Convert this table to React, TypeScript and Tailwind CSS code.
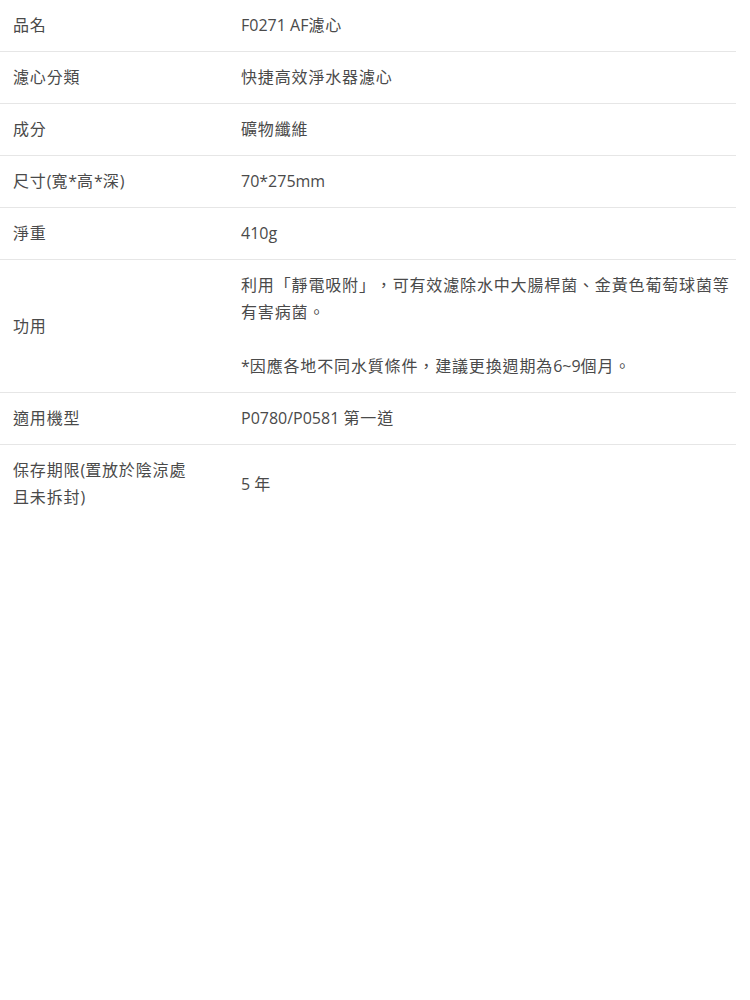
import React from 'react'

// CJK runs get extra tracking; latin keeps its natural width
function T({ s }: { s: string }) {
  const parts = s.split(/([\u3000-\u9fff\uff00-\uffef]+)/)
  return (
    <>
      {parts.map((p, i) =>
        i % 2 === 1 ? (
          <span key={i} className="tracking-[0.85px]">{p}</span>
        ) : (
          <span key={i}>{p}</span>
        )
      )}
    </>
  )
}

const rows: { label: React.ReactNode; value: React.ReactNode }[] = [
  { label: <T s="品名" />, value: <T s="F0271 AF濾心" /> },
  { label: <T s="濾心分類" />, value: <T s="快捷高效淨水器濾心" /> },
  { label: <T s="成分" />, value: <T s="礦物纖維" /> },
  { label: <T s="尺寸(寬*高*深)" />, value: <T s="70*275mm" /> },
  { label: <T s="淨重" />, value: <T s="410g" /> },
  {
    label: <T s="功用" />,
    value: (
      <>
        <p><T s="利用「靜電吸附」，可有效濾除水中大腸桿菌、金黃色葡萄球菌等有害病菌。" /></p>
        <p className="mt-[27px]"><T s="*因應各地不同水質條件，建議更換週期為6~9個月。" /></p>
      </>
    ),
  },
  { label: <T s="適用機型" />, value: <T s="P0780/P0581 第一道" /> },
  {
    label: (
      <>
        <T s="保存期限(置放於陰涼處" />
        <br />
        <T s="且未拆封)" />
      </>
    ),
    value: <T s="5 年" />,
  },
]

export default function App() {
  return (
    <div
      className="w-[736px] bg-white text-[16px] leading-[27px] text-[#4a4a4a] [text-spacing-trim:space-all]"
      style={{ fontFamily: '"Open Sans", "Noto Sans CJK TC", sans-serif' }}
    >
      {rows.map((r, i) => (
        <div
          key={i}
          className={
            'grid grid-cols-[228px_1fr] ' +
            (i < rows.length - 1 ? 'border-b border-[#e6e6e6]' : '')
          }
        >
          <div className="flex items-center py-3 pl-[13px] pr-2">
            <div>{r.label}</div>
          </div>
          <div className="flex items-center py-3 pl-[13px]">
            <div>{r.value}</div>
          </div>
        </div>
      ))}
    </div>
  )
}
